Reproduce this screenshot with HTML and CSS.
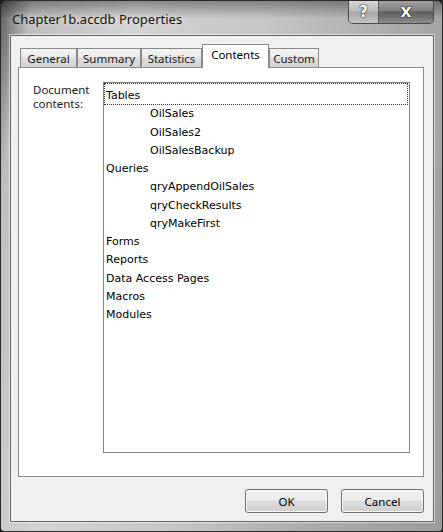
FILE: index.html
```html
<!DOCTYPE html>
<html>
<head>
<meta charset="utf-8">
<title>Chapter1b.accdb Properties</title>
<link rel="stylesheet" href="styles.css">
</head>
<body>
<div class="window">
  <div class="titlebar">
    <span class="title">Chapter1b.accdb Properties</span>
    <div class="caption">
      <div class="cap-btn cap-help">?</div>
      <div class="cap-btn cap-close">X</div>
    </div>
  </div>
  <div class="client">
    <div class="tabs">
      <div class="tab tab-general">General</div>
      <div class="tab tab-summary">Summary</div>
      <div class="tab tab-statistics">Statistics</div>
      <div class="tab tab-contents tab-active">Contents</div>
      <div class="tab tab-custom">Custom</div>
    </div>
    <div class="panel">
      <div class="label">Document<br>contents:</div>
      <div class="listbox">
        <div class="item focus">Tables</div>
        <div class="item child">OilSales</div>
        <div class="item child">OilSales2</div>
        <div class="item child">OilSalesBackup</div>
        <div class="item">Queries</div>
        <div class="item child">qryAppendOilSales</div>
        <div class="item child">qryCheckResults</div>
        <div class="item child">qryMakeFirst</div>
        <div class="item">Forms</div>
        <div class="item">Reports</div>
        <div class="item">Data Access Pages</div>
        <div class="item">Macros</div>
        <div class="item">Modules</div>
      </div>
    </div>
    <div class="buttons">
      <button class="btn">OK</button>
      <button class="btn">Cancel</button>
    </div>
  </div>
</div>
</body>
</html>
```

FILE: styles.css
```css
* { box-sizing: border-box; }
html, body { margin: 0; padding: 0; }
body {
  width: 443px;
  height: 532px;
  background: #1c1c1c;
  overflow: hidden;
}
.window {
  width: 443px;
  height: 532px;
  border: 1px solid #2a2a2a;
  border-radius: 6px 6px 4px 4px;
  padding: 0 8px 9px 9px;
  display: flex;
  flex-direction: column;
  background:
    linear-gradient(to bottom, rgba(0,0,0,0.35) 0px, rgba(0,0,0,0) 18px),
    linear-gradient(100deg, #5c5c5c 0%, #bdbdbd 6%, #d3d3d3 25%, #c6c6c6 50%, #ababab 75%, #9c9c9c 100%);
}
.titlebar {
  height: 34px;
  flex: none;
  display: flex;
  justify-content: space-between;
  align-items: flex-start;
}
.title {
  font-family: "Noto Sans", sans-serif;
  font-size: 13px;
  line-height: 17px;
  color: #141414;
  margin: 10px 0 0 2px;
  text-shadow: 0 0 6px rgba(255,255,255,0.7);
}
.caption {
  display: flex;
  border: 1px solid #4a4a4a;
  border-top: none;
  border-radius: 0 0 5px 5px;
  overflow: hidden;
  height: 23px;
}
.cap-btn {
  height: 22px;
  display: flex;
  align-items: center;
  justify-content: center;
  font-family: "DejaVu Sans", sans-serif;
  font-weight: bold;
  color: #fff;
  text-shadow: 0 0 2px #222, 0 0 1px #000;
}
.cap-help {
  width: 30px;
  font-size: 15px;
  border-right: 1px solid #5a5a5a;
  background: linear-gradient(to bottom, #d6d6d6 0%, #bcbcbc 45%, #a6a6a6 50%, #c4c4c4 100%);
}
.cap-close {
  width: 54px;
  font-size: 14px;
  background: linear-gradient(to bottom, #a2a2a2 0%, #7e7e7e 45%, #5e5e5e 50%, #8c8c8c 100%);
}
.client {
  flex: 1;
  background: #f0f0f0;
  border: 1px solid #626262;
  box-shadow: 0 0 0 1px rgba(255,255,255,0.55);
  padding: 8px 9px 0 7px;
  display: flex;
  flex-direction: column;
}
.tabs {
  height: 23px;
  display: flex;
  align-items: flex-end;
  padding-left: 2px;
  flex: none;
}
.tab {
  height: 19px;
  border: 1px solid #8a8a8a;
  border-bottom: none;
  font-family: "Noto Sans", sans-serif;
  font-size: 11.5px;
  line-height: 17px;
  padding-top: 1px;
  text-align: center;
  color: #1a1a1a;
  background: linear-gradient(to bottom, #f3f3f3 0%, #ebebeb 45%, #dddddd 50%, #d3d3d3 100%);
}
.tab-general { width: 57px; }
.tab-summary { width: 64px; }
.tab-statistics { width: 61px; }
.tab-contents { width: 67px; }
.tab-custom { width: 50px; }
.tab-active {
  height: 24px;
  margin-bottom: -1px;
  position: relative;
  z-index: 2;
  background: #ffffff;
  padding-top: 0;
  line-height: 20px;
  color: #000;
}
.panel {
  height: 410px;
  flex: none;
  background: #ffffff;
  border: 1px solid #8a8a8a;
  padding: 14px 13px 23px 14px;
  display: flex;
}
.label {
  width: 70px;
  flex: none;
  font-family: "Noto Sans", sans-serif;
  font-size: 11.5px;
  line-height: 14px;
  color: #1a1a1a;
  padding-top: 1px;
}
.listbox {
  flex: 1;
  border: 1px solid #858585;
  padding-top: 1px;
  font-family: "DejaVu Sans", sans-serif;
  font-size: 11px;
  color: #000;
}
.item {
  line-height: 18.25px;
  height: 18.25px;
  padding-left: 2px;
  white-space: nowrap;
}
.item.child { padding-left: 46px; }
.item.focus {
  height: 22.25px;
  border: 1px dotted #333;
  margin: -1px 1px 0 0;
  padding-top: 3px;
  padding-left: 1px;
}
.buttons {
  display: flex;
  justify-content: flex-end;
  gap: 13px;
  margin-top: 12px;
  padding-right: 0;
}
.btn {
  width: 83px;
  height: 24px;
  border: 1px solid #707070;
  border-radius: 3px;
  box-shadow: inset 0 0 0 1px #fbfbfb;
  background: linear-gradient(to bottom, #f2f2f2 0%, #ebebeb 45%, #dddddd 50%, #cfcfcf 100%);
  font-family: "Noto Sans", sans-serif;
  font-size: 11.5px;
  color: #000;
  padding: 0;
  margin: 0;
}
```
